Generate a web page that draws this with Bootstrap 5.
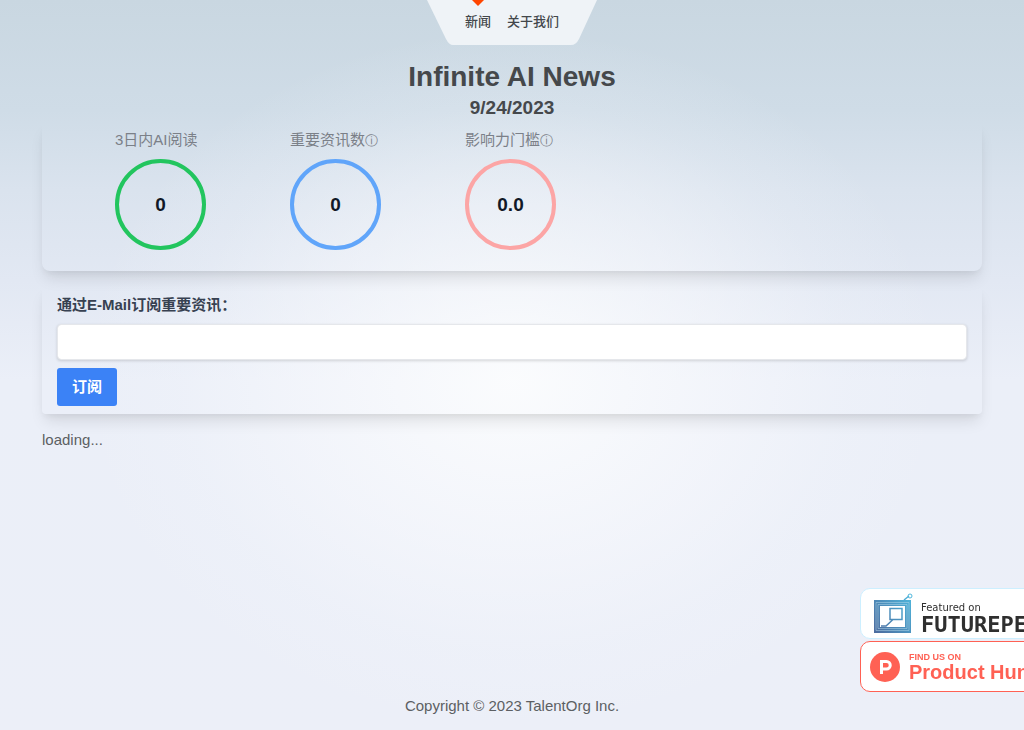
<!DOCTYPE html>
<html lang="zh">
<head>
<meta charset="utf-8">
<meta name="viewport" content="width=device-width, initial-scale=1">
<title>Infinite AI News</title>
<link href="https://cdn.jsdelivr.net/npm/bootstrap@5.3.0/dist/css/bootstrap.min.css" rel="stylesheet">
<style>
body {
  font-family: "Liberation Sans", "Noto Sans CJK SC", sans-serif;
  font-size: 15px; line-height: 24px; color: #5c5f63;
  background:
    radial-gradient(ellipse 430px 350px at 50% 380px, rgba(252,253,254,.92), rgba(249,250,253,.5) 50%, rgba(243,246,251,.2) 78%, rgba(240,243,250,0)),
    linear-gradient(#c9d7e1, #cfdce7 110px, #dae3ee 190px, #e2e8f3 280px, #ebeff8 380px, #eceff8);
}
.top-menu { width: 170px; height: 46px; }
.top-menu .menu-shape { width: 100%; height: 100%; }
.top-menu .nav-link { font-size: 13px; line-height: 20px; font-weight: 500; color: #43474b; }
.menu-marker { top: -5px; left: 45px; }
.page { padding: 0 42px; }
.page-title { padding-top: 14px; }
.site-title { font-size: 28px; line-height: 34px; color: #45484b; }
.site-date { font-size: 19px; line-height: 28px; color: #45484b; }
.panel { box-shadow: 0 10px 15px -3px rgba(0,0,0,.1), 0 4px 6px -2px rgba(0,0,0,.05); }
.stats { padding: 7px 0 21px 73px; border-radius: 8px; }
.stat { width: 175px; color: #7b8088; }
.stat-label { font-size: 15px; line-height: 22px; }
.info-mark { font: 13px/1 "DejaVu Sans", sans-serif; }
.ring { width: 91px; height: 91px; border: 4px solid; font-size: 19px; }
.ring span { color: #111827; }
.ring-green { border-color: #22c55e; }
.ring-blue { border-color: #60a5fa; }
.ring-red { border-color: #fca5a5; }
.subscribe { margin-top: 15px; padding: 8px 15px; border-radius: 4px; }
.subscribe label { color: #374151; line-height: 22px; }
.subscribe .form-control { height: 36px; border: 1px solid #e5e7eb; border-radius: 4px; box-shadow: 0 1px 3px rgba(0,0,0,.15); }
.subscribe .btn { height: 38px; padding: 0 15px; font-size: 15px; border: 0; border-radius: 3px; background: #3b82f6; }
.status { margin: 14px 0 0; }
.badges { right: -32px; bottom: 38px; width: 196px; gap: 2px; }
.award { height: 51px; background: #fff; border: 1px solid; border-radius: 10px; white-space: nowrap; line-height: 1; }
.award svg { flex-shrink: 0; }
.award-future { border-color: #cdefff; color: #2f2f2f; }
.award-hunt { border-color: #ff6154; color: #ff6154; }
.future-text { padding-top: 10px; }
.future-small { font: 10px/12px "DejaVu Sans", sans-serif; }
.future-name { font: bold 22px/22px "DejaVu Sans Mono", monospace; }
.hunt-small { font-size: 9px; line-height: 10px; }
.hunt-name { font-size: 20px; line-height: 20px; }
</style>
</head>
<body class="d-flex flex-column min-vh-100 overflow-x-hidden">
<header class="top-menu position-relative mx-auto">
  <svg class="menu-shape position-absolute top-0 start-0" viewBox="0 0 170 46" aria-hidden="true"><path d="M0 0H170L152 39Q149 45 144 45H26Q22 45 19 39Z" fill="#eff3f7"/></svg>
  <svg class="menu-marker position-absolute" width="12" height="11" viewBox="0 0 12 11" aria-hidden="true"><path d="M6 0L12 5L6 11L0 5Z" fill="#ff4500"/></svg>
  <nav class="nav position-relative justify-content-center gap-3 pt-2 mt-1 flex-nowrap">
    <a class="nav-link p-0" href="#">新闻</a>
    <a class="nav-link p-0" href="#">关于我们</a>
  </nav>
</header>
<main class="page flex-grow-1">
  <div class="page-title text-center">
    <h1 class="site-title fw-bold m-0">Infinite AI News</h1>
    <h2 class="site-date fw-bold m-0">9/24/2023</h2>
  </div>
  <section class="panel stats d-flex">
    <div class="stat"><div class="stat-label mb-2">3日内AI阅读</div><div class="ring ring-green rounded-circle d-flex align-items-center justify-content-center fw-bold"><span>0</span></div></div>
    <div class="stat"><div class="stat-label mb-2">重要资讯数<span class="info-mark">ⓘ</span></div><div class="ring ring-blue rounded-circle d-flex align-items-center justify-content-center fw-bold"><span>0</span></div></div>
    <div class="stat"><div class="stat-label mb-2">影响力门槛<span class="info-mark">ⓘ</span></div><div class="ring ring-red rounded-circle d-flex align-items-center justify-content-center fw-bold"><span>0.0</span></div></div>
  </section>
  <form class="panel subscribe">
    <label class="d-block fw-bold mb-2" for="email">通过E-Mail订阅重要资讯：</label>
    <input class="form-control mb-2" id="email" type="email">
    <button class="btn btn-primary fw-bold d-block" type="button">订阅</button>
  </form>
  <p class="status">loading...</p>
</main>
<footer class="text-center pb-2 mb-1">Copyright © 2023 TalentOrg Inc.</footer>
<aside class="badges position-fixed d-flex flex-column">
  <a class="award award-future d-flex align-items-center text-decoration-none ps-2" href="#">
    <svg class="ms-1 me-2" width="40" height="42" viewBox="0 0 40 42" fill="none" aria-hidden="true">
      <defs><linearGradient id="tv" gradientUnits="userSpaceOnUse" x1="1" x2="40" y1="36" y2="6"><stop stop-color="#4c6da0"/><stop offset="1" stop-color="#4fb6dc"/></linearGradient></defs>
      <g stroke="url(#tv)"><rect x="4" y="10" width="31" height="27" stroke-width="6"/><path d="M17 15.500h12v11H17zM8 33h5l7-6.500M31 7l5-4" stroke-width="1.500"/><circle cx="37" cy="3" r="2"/></g>
      <path d="M3 9.500h33v28H3zM5 11.500h29v24H5z" stroke="#b4d8ea" stroke-width=".5"/>
    </svg>
    <span class="future-text"><span class="future-small d-block">Featured on</span><span class="future-name d-block">FUTUREPEDIA</span></span>
  </a>
  <a class="award award-hunt d-flex align-items-center text-decoration-none ps-2" href="#">
    <svg class="me-2" width="32" height="32" viewBox="0 0 32 32" aria-hidden="true"><circle cx="16" cy="16" r="15" fill="#ff6154"/><path d="M12.500 23V10.500h5a3.500 3.500 0 0 1 0 7.500h-5" fill="none" stroke="#fff" stroke-width="3"/></svg>
    <span class="fw-bold"><span class="hunt-small d-block">FIND US ON</span><span class="hunt-name d-block">Product Hunt</span></span>
  </a>
</aside>
<script src="https://cdn.jsdelivr.net/npm/bootstrap@5.3.0/dist/js/bootstrap.bundle.min.js"></script>
</body>
</html>
